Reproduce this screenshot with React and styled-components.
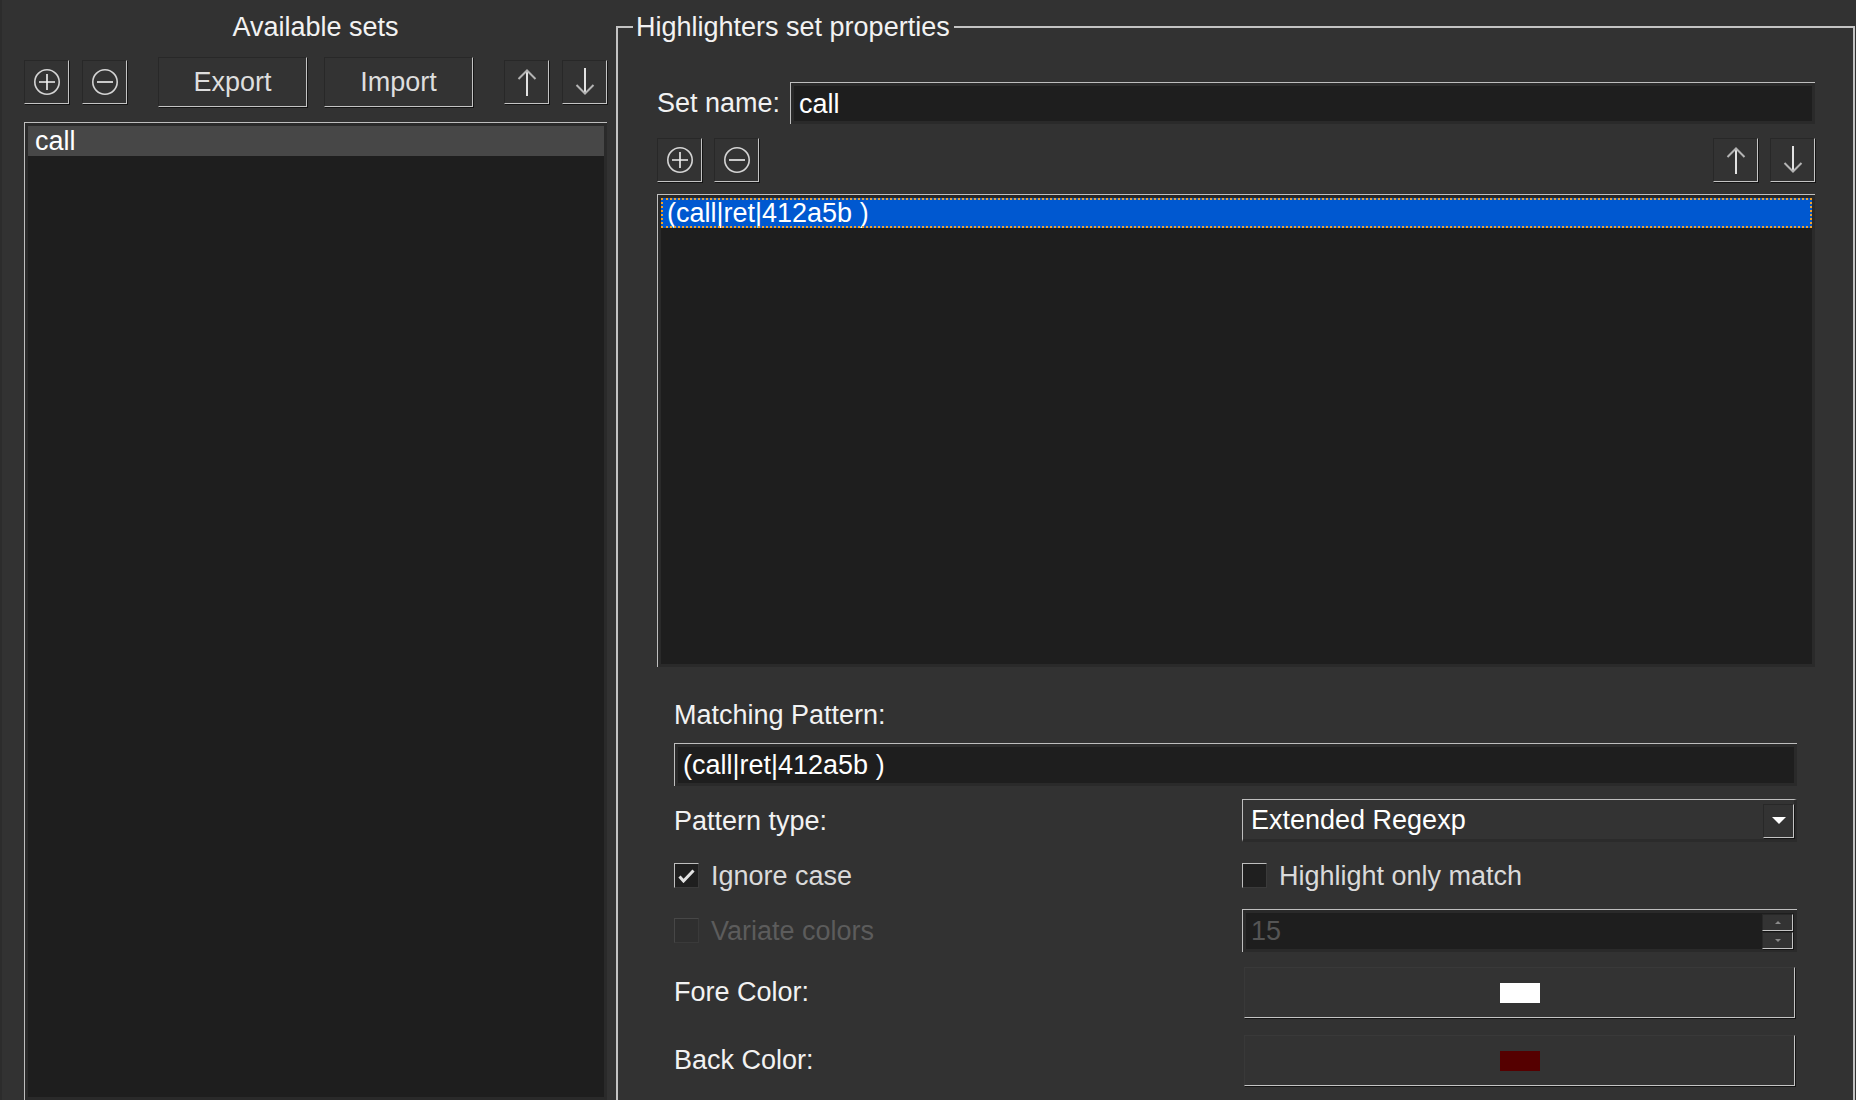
import styled, { createGlobalStyle } from 'styled-components';

const GlobalStyle = createGlobalStyle`
  * { box-sizing: border-box; }
  html, body {
    margin: 0;
    padding: 0;
    background: #323232;
  }
  body {
    font-family: 'Liberation Sans', Arial, sans-serif;
    font-size: 27px;
    color: #f2f2f2;
  }
`;

const Window = styled.div`
  display: flex;
  width: 1856px;
  height: 1100px;
  overflow: hidden;
  background: #323232;
  border-left: 2px solid #2c2c2c;
`;

/* ---------- shared widget looks ---------- */

const raised = `
  background: #333333;
  border-top: 1px solid #282828;
  border-left: 1px solid #282828;
  border-right: 1px solid #c4c4c4;
  border-bottom: 1px solid #c4c4c4;
  box-shadow: 1px 1px 0 #141414;
`;

const sunken = `
  border-top: 1px solid #bebebe;
  border-left: 1px solid #bebebe;
  background: #1e1e1e;
  box-shadow: inset 0 0 0 3px #2a2a2a;
`;

const IconButton = styled.button`
  ${raised}
  width: 45px;
  height: 44px;
  padding: 0;
  display: flex;
  align-items: center;
  justify-content: center;
  flex-shrink: 0;
`;

const TextButton = styled.button`
  ${raised}
  width: 149px;
  height: 50px;
  padding: 0;
  font: inherit;
  color: #dedede;
  line-height: 30px;
`;

const ButtonGroup = styled.div`
  display: flex;
  gap: ${(p) => p.$gap || 13}px;
`;

/* ---------- left panel ---------- */

const LeftPanel = styled.div`
  display: flex;
  flex-direction: column;
  width: 614px;
  flex-shrink: 0;
  padding: 11px 9px 0 22px;
`;

const PanelTitle = styled.div`
  height: 32px;
  line-height: 32px;
  text-align: center;
  color: #f2f2f2;
`;

const Toolbar = styled.div`
  display: flex;
  align-items: center;
  justify-content: space-between;
  height: ${(p) => p.$height || 50}px;
  margin-top: ${(p) => p.$top || 0}px;
`;

const ListBox = styled.div`
  ${sunken}
  padding: 3px;
  margin-top: ${(p) => p.$top || 0}px;
  flex: ${(p) => (p.$grow ? 1 : 'none')};
  height: ${(p) => (p.$height ? `${p.$height}px` : 'auto')};
`;

const ListRow = styled.div`
  height: 30px;
  line-height: 30px;
  padding-left: ${(p) => (p.$current ? 6 : 7)}px;
  color: #ffffff;
  background: ${(p) => (p.$current ? '#0058d0' : '#474747')};
  outline: ${(p) => (p.$current ? '2px dotted #f2a12a' : 'none')};
  outline-offset: -2px;
  white-space: pre;
`;

/* ---------- group box ---------- */

const GroupBox = styled.fieldset`
  flex: 1;
  min-width: 0;
  margin: 12px 1px 0 0;
  padding: 0;
  border: 2px solid #c3c3c3;
  border-bottom: none;
`;

const GroupTitle = styled.legend`
  margin-left: 15px;
  padding: 0 4px 0 3px;
  line-height: 30px;
  color: #f2f2f2;
`;

const GroupBody = styled.div`
  padding: 0 38px 0 39px;
`;

const NameRow = styled.div`
  display: flex;
  align-items: center;
  gap: 10px;
  height: 42px;
  margin-top: 40px;
`;

const Label = styled.span`
  line-height: 30px;
  color: ${(p) => (p.$disabled ? '#5a5a5a' : '#f2f2f2')};
  white-space: nowrap;
`;

const TextField = styled.div`
  ${sunken}
  display: flex;
  align-items: center;
  flex: 1;
  height: ${(p) => p.$height || 43}px;
  margin-top: ${(p) => p.$top || 0}px;
  padding: 0 4px 0 8px;
  line-height: 30px;
  color: ${(p) => (p.$disabled ? '#555555' : '#ffffff')};
  white-space: pre;
`;

const FieldText = styled.span`
  flex: 1;
`;

const Form = styled.div`
  padding: 0 18px 0 17px;
  margin-top: 33px;
`;

const FormGrid = styled.div`
  display: grid;
  grid-template-columns: 568px 1fr;
  grid-template-rows: 43px 43px 43px 54px 56px;
  row-gap: 12px;
  align-items: center;
  margin-top: 13px;
`;

const Combo = styled.div`
  display: flex;
  align-items: center;
  height: 43px;
  padding: 0 0 0 8px;
  border-top: 1px solid #bebebe;
  border-left: 1px solid #bebebe;
  border-right: 3px solid #2b2b2b;
  border-bottom: 3px solid #2b2b2b;
  background: #333333;
  line-height: 30px;
  color: #ffffff;
`;

const DropButton = styled.div`
  ${raised}
  width: 31px;
  height: 34px;
  display: flex;
  align-items: center;
  justify-content: center;
  margin-top: 2px;
`;

const SpinButtons = styled.div`
  display: flex;
  flex-direction: column;
  gap: 1px;
  width: 31px;
  height: 35px;
`;

const SpinButton = styled.div`
  ${raised}
  flex: 1;
  display: flex;
  align-items: center;
  justify-content: center;
`;

const CheckRow = styled.label`
  display: flex;
  align-items: center;
  gap: 12px;
`;

const CheckBox = styled.span`
  width: 25px;
  height: 25px;
  display: flex;
  align-items: center;
  justify-content: center;
  background: ${(p) => (p.$disabled ? '#2f2f2f' : '#1f1f1f')};
  border-top: 1px solid ${(p) => (p.$disabled ? '#474747' : '#bebebe')};
  border-left: 1px solid ${(p) => (p.$disabled ? '#474747' : '#bebebe')};
  border-right: 1px solid #3a3a3a;
  border-bottom: 1px solid #3a3a3a;
`;

const CheckLabel = styled.span`
  line-height: 30px;
  color: ${(p) => (p.$disabled ? '#5c5c5c' : '#dadada')};
`;

const ColorButton = styled.div`
  align-self: end;
  height: 51px;
  margin: 0 2px;
  display: flex;
  align-items: center;
  justify-content: center;
  background: #333333;
  border-top: 1px solid #393939;
  border-left: 1px solid #393939;
  border-right: 1px solid #c4c4c4;
  border-bottom: 1px solid #c4c4c4;
  box-shadow: 1px 1px 0 #141414;
`;

const Swatch = styled.span`
  width: 40px;
  height: 20px;
  background: ${(p) => p.$color};
`;

const LabelCell = styled.div`
  align-self: ${(p) => (p.$end ? 'end' : 'center')};
  padding-bottom: ${(p) => (p.$end ? 10 : 0)}px;
`;

/* ---------- icons ---------- */

function PlusIcon() {
  return (
    <svg width="28" height="28" viewBox="0 0 28 28" fill="none">
      <circle cx="14" cy="14" r="12.2" stroke="#d4d4d4" strokeWidth="1.6" />
      <path d="M6 14h16M14 6v16" stroke="#f0f0f0" strokeWidth="1.6" />
    </svg>
  );
}

function MinusIcon() {
  return (
    <svg width="28" height="28" viewBox="0 0 28 28" fill="none">
      <circle cx="14" cy="14" r="12.2" stroke="#d4d4d4" strokeWidth="1.6" />
      <path d="M6 14h16" stroke="#f0f0f0" strokeWidth="1.6" />
    </svg>
  );
}

function UpIcon() {
  return (
    <svg width="20" height="28" viewBox="0 0 20 28" fill="none">
      <path d="M10 2v26" stroke="#e2e2e2" strokeWidth="2" />
      <path d="M1.5 11L10 2.5 18.5 11" stroke="#b4b4b4" strokeWidth="2" />
    </svg>
  );
}

function DownIcon() {
  return (
    <svg width="20" height="28" viewBox="0 0 20 28" fill="none">
      <path d="M10 0v26" stroke="#e2e2e2" strokeWidth="2" />
      <path d="M1.5 17L10 25.5 18.5 17" stroke="#b4b4b4" strokeWidth="2" />
    </svg>
  );
}

function CaretDown({ size = 14, color = '#ffffff' }) {
  return (
    <svg width={size} height={size / 2} viewBox="0 0 14 7">
      <path d="M0 0h14L7 7z" fill={color} />
    </svg>
  );
}

function CaretUp({ size = 6, color = '#8a8a8a' }) {
  return (
    <svg width={size} height={size / 2} viewBox="0 0 14 7">
      <path d="M0 7h14L7 0z" fill={color} />
    </svg>
  );
}

function CheckIcon() {
  return (
    <svg width="17" height="14" viewBox="0 0 17 14" fill="none">
      <path d="M1.5 7.5l4 4.5L15.5 1.5" stroke="#e2e2e2" strokeWidth="3" />
    </svg>
  );
}

function Check({ checked, disabled, children }) {
  return (
    <CheckRow>
      <CheckBox $disabled={disabled}>{checked && <CheckIcon />}</CheckBox>
      <CheckLabel $disabled={disabled}>{children}</CheckLabel>
    </CheckRow>
  );
}

/* ---------- page ---------- */

const pattern = '(call|ret|412a5b )';

export default function App() {
  return (
    <>
      <GlobalStyle />
      <Window>
        <LeftPanel>
          <PanelTitle>Available sets</PanelTitle>
          <Toolbar $top={14}>
            <ButtonGroup>
              <IconButton><PlusIcon /></IconButton>
              <IconButton><MinusIcon /></IconButton>
            </ButtonGroup>
            <ButtonGroup $gap={17}>
              <TextButton>Export</TextButton>
              <TextButton>Import</TextButton>
            </ButtonGroup>
            <ButtonGroup>
              <IconButton><UpIcon /></IconButton>
              <IconButton><DownIcon /></IconButton>
            </ButtonGroup>
          </Toolbar>
          <ListBox $top={15} $grow>
            <ListRow>call</ListRow>
          </ListBox>
        </LeftPanel>

        <GroupBox>
          <GroupTitle>Highlighters set properties</GroupTitle>
          <GroupBody>
            <NameRow>
              <Label>Set name:</Label>
              <TextField $height={42}>call</TextField>
            </NameRow>

            <Toolbar $top={14} $height={44}>
              <ButtonGroup $gap={12}>
                <IconButton><PlusIcon /></IconButton>
                <IconButton><MinusIcon /></IconButton>
              </ButtonGroup>
              <ButtonGroup $gap={12}>
                <IconButton><UpIcon /></IconButton>
                <IconButton><DownIcon /></IconButton>
              </ButtonGroup>
            </Toolbar>

            <ListBox $top={12} $height={473}>
              <ListRow $current>{pattern}</ListRow>
            </ListBox>

            <Form>
              <Label>Matching Pattern:</Label>
              <TextField $top={12}>{pattern}</TextField>

              <FormGrid>
                <Label>Pattern type:</Label>
                <Combo>
                  <FieldText>Extended Regexp</FieldText>
                  <DropButton><CaretDown /></DropButton>
                </Combo>

                <Check checked>Ignore case</Check>
                <Check>Highlight only match</Check>

                <Check disabled>Variate colors</Check>
                <TextField $disabled>
                  <FieldText>15</FieldText>
                  <SpinButtons>
                    <SpinButton><CaretUp /></SpinButton>
                    <SpinButton><CaretDown size={6} color="#8a8a8a" /></SpinButton>
                  </SpinButtons>
                </TextField>

                <LabelCell $end>
                  <Label>Fore Color:</Label>
                </LabelCell>
                <ColorButton>
                  <Swatch $color="#ffffff" />
                </ColorButton>

                <LabelCell $end>
                  <Label>Back Color:</Label>
                </LabelCell>
                <ColorButton>
                  <Swatch $color="#550000" />
                </ColorButton>
              </FormGrid>
            </Form>
          </GroupBody>
        </GroupBox>
      </Window>
    </>
  );
}
